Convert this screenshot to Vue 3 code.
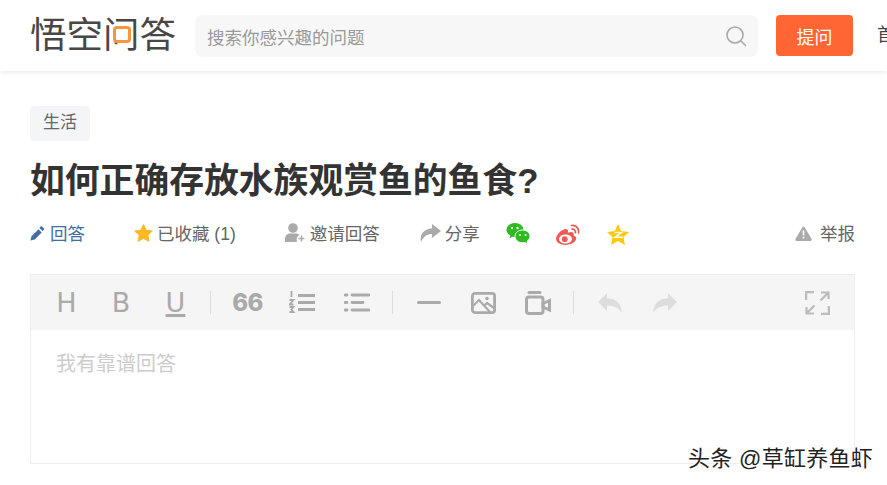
<template>
  <div class="page">
    <header class="topbar">
      <div class="logo">悟空问答<i class="logoMark"></i></div>
      <div class="search">
        <span class="searchText">搜索你感兴趣的问题</span>
        <svg class="searchIcon" width="22" height="22" viewBox="0 0 22 22" fill="none" stroke="#a8a8a8" stroke-width="1.6">
          <circle cx="10" cy="10" r="8" />
          <path d="M16 16l4.5 4.5" stroke-linecap="round" />
        </svg>
      </div>
      <button class="askBtn" type="button">提问</button>
      <nav class="nav">首页</nav>
    </header>

    <main class="content">
      <div class="tag">生活</div>
      <h1 class="title">如何正确存放水族观赏鱼的鱼食?</h1>

      <div class="actions">
        <a class="action action--answer">
          <svg width="15" height="15" viewBox="0 0 15 15" fill="#406fa8">
            <path d="M0.5 14.5l1-4.2 7-7 3.2 3.2-7 7zM9.4 1.9l1.300-1.300a0.900 0.900 0 0 1 1.300 0l1.900 1.900a0.900 0.900 0 0 1 0 1.300l-1.300 1.300z" />
          </svg>
          回答
        </a>
        <a class="action action--fav">
          <svg width="19" height="18" viewBox="0 0 19 18" fill="#fdb824">
            <path d="M9.5 0.6l2.7 5.6 6.100 0.800-4.500 4.200 1.200 6.100-5.500-3-5.500 3 1.200-6.100L0.700 7l6.100-0.800z" stroke="#fdb824" stroke-linejoin="round" />
          </svg>
          已收藏 (1)
        </a>
        <a class="action action--invite">
          <svg width="21" height="20" viewBox="0 0 21 20" fill="#aaa">
            <circle cx="8" cy="5" r="4.800" />
            <path d="M0 19v-3.500c0-3 2.600-5 5-5h6c1.500 0 2.800 0.600 3.600 1.600-2.400 0.800-3.600 3.600-2.600 6.900z" />
            <path d="M16.500 12.500v6M13.500 15.500h6" stroke="#aaa" stroke-width="1.500" fill="none" />
          </svg>
          邀请回答
        </a>
        <a class="action action--share">
          <svg width="21" height="18" viewBox="0 0 21 18" fill="#aaa">
            <path d="M12 0l9 7-9 7v-4c-5 0-8.500 2.500-11 8-1.700-7 2.500-13 11-13.700z" />
          </svg>
          分享
        </a>
        <svg class="social social--wechat" width="24" height="22" viewBox="0 0 24 22">
          <path d="M9 0c4.700 0 8.500 3.100 8.500 7 0 3.900-3.800 7-8.500 7-0.900 0-1.700-0.100-2.500-0.300l-2.900 1.600 0.700-2.700c-2.300-1.300-3.800-3.300-3.800-5.600 0-3.900 3.800-7 8.500-7z" fill="#2dbb1e" />
          <path d="M16.500 7c4.100 0 7.500 2.800 7.500 6.300 0 2-1.100 3.700-2.900 4.900l0.700 3-2.900-1.700c-0.800 0.200-1.600 0.300-2.400 0.300-4.100 0-7.500-2.800-7.500-6.500 0-3.500 3.400-6.300 7.500-6.300z" fill="#2dbb1e" stroke="#fff" stroke-width="1" />
          <circle cx="6" cy="5" r="1.200" fill="#fff" />
          <circle cx="11.500" cy="5" r="1.200" fill="#fff" />
          <circle cx="14" cy="12" r="1.100" fill="#fff" />
          <circle cx="19.500" cy="12" r="1.100" fill="#fff" />
        </svg>
        <svg class="social social--weibo" width="24" height="21" viewBox="0 0 24 21">
          <path d="M9.500 21c-5 0-9.500-2.400-9.500-6.200 0-3.900 6-9.800 9.700-9.800 2 0 2.800 1.600 2.100 3.800 3-1.200 6-1.100 6 1.600 0 0.700-0.200 1.200-0.200 1.200 1.500 0.400 2.600 1.400 2.600 3 0 3.200-5.100 6.400-10.700 6.400z" fill="#ef5b54" />
          <ellipse cx="9.500" cy="15" rx="6.500" ry="4.500" fill="#fff" />
          <circle cx="8.800" cy="15.200" r="2.900" fill="#ef5b54" />
          <path d="M15.500 1.500c4-0.900 8 2.700 7 7.500M16 5.200c2.100-0.400 3.800 1.400 3.400 3.500" fill="none" stroke="#ef5b54" stroke-width="1.700" stroke-linecap="round" />
        </svg>
        <svg class="social social--qzone" width="22" height="21" viewBox="0 0 22 21">
          <path d="M11 0l3.200 7 7.800 0.900-5.500 5 1.400 8.100-6.900-4-6.900 4 1.400-8.100-5.500-5 7.800-0.900z" fill="#fdc90f" />
          <path d="M7.500 8.500h7.200l-6.700 4.700h7.500" fill="none" stroke="#fff" stroke-width="1.500" />
        </svg>
        <a class="action action--report">
          <svg width="17" height="15" viewBox="0 0 17 15" fill="#aaa">
            <path d="M8.500 0.500a1.200 1.200 0 0 1 1 0.600l7 12a1.200 1.200 0 0 1-1 1.800h-14a1.200 1.200 0 0 1-1-1.800l7-12a1.200 1.200 0 0 1 1-0.600z" />
            <path d="M8.500 4.500v5M8.500 10.800v1.700" stroke="#fff" stroke-width="1.700" fill="none" />
          </svg>
          举报
        </a>
      </div>

      <section class="editor">
        <div class="toolbar">
          <span class="tool tool--text">H</span>
          <span class="tool tool--text">B</span>
          <span class="tool tool--text tool--under">U</span>
          <i class="sep"></i>
          <span class="tool tool--quote">66</span>
          <span class="tool">
            <svg width="26" height="23" viewBox="0 0 26 23" fill="none" stroke="#aaa" stroke-width="2.800">
              <path d="M9 4.500h17M9 11.500h17M9 18.500h17" />
              <path d="M2.500 0v6M0.500 9h4l-4 4.500h4M0.500 16h4l-2 2.500 2 2.500h-4" stroke-width="1.800" />
            </svg>
          </span>
          <span class="tool">
            <svg width="26" height="19" viewBox="0 0 26 19" fill="none" stroke="#aaa" stroke-width="2.800" stroke-linecap="round">
              <path d="M1 2h2M8 2h17M1 9.500h2M8 9.500h11M1 17h2M8 17h17" />
            </svg>
          </span>
          <i class="sep"></i>
          <span class="tool">
            <svg width="24" height="3" viewBox="0 0 24 3"><rect width="24" height="3" rx="1.500" fill="#aaa" /></svg>
          </span>
          <span class="tool">
            <svg width="25" height="22" viewBox="0 0 25 22" fill="none" stroke="#aaa" stroke-width="2.800">
              <rect x="1.400" y="1.400" width="22.200" height="19.200" rx="2.500" />
              <path d="M2 14l6-6 11 12M13 14l3-3 7 5" stroke-width="2.200" />
              <circle cx="16" cy="6.500" r="1.800" fill="#aaa" stroke="none" />
            </svg>
          </span>
          <span class="tool">
            <svg width="26" height="24" viewBox="0 0 26 24" fill="none" stroke="#aaa" stroke-width="3">
              <rect x="1.500" y="6" width="16.500" height="16.500" rx="2.500" />
              <path d="M4 1.500h11" stroke-linecap="round" />
              <path d="M18 12.500l6.500-3v9.500l-6.500-3z" />
            </svg>
          </span>
          <i class="sep"></i>
          <span class="tool">
            <svg width="24" height="20" viewBox="0 0 24 20" fill="#ddd">
              <path d="M9 0v5.500c8-0.500 14 4 15 14.500-3.500-5.500-8-7.500-15-7.500v5.500L0 9z" />
            </svg>
          </span>
          <span class="tool">
            <svg width="24" height="20" viewBox="0 0 24 20" fill="#ddd">
              <path d="M15 0v5.500c-8-0.500-14 4-15 14.500 3.500-5.500 8-7.500 15-7.500v5.500l9-9z" />
            </svg>
          </span>
          <span class="tool tool--full">
            <svg width="25" height="24" viewBox="0 0 25 24" fill="none" stroke="#bbb" stroke-width="2.200">
              <path d="M1.100 9V1.100H9M23.900 15v7.900H16M16 1.500h7.500V8M23 2l-7.500 7.500M9 22.500H1.500V16M2 22l7.500-7.500" />
            </svg>
          </span>
        </div>
        <div class="placeholder">我有靠谱回答</div>
      </section>
    </main>

    <div class="watermark">头条 @草缸养鱼虾</div>
  </div>
</template>

<script setup>
</script>

<style>
html,
body {
  margin: 0;
  background: #fff;
  overflow: hidden;
}
</style>

<style scoped>
.page {
  position: relative;
  width: 887px;
  height: 485px;
  overflow: hidden;
  background: #fff;
  font-family: "Liberation Sans", "Noto Sans CJK SC", sans-serif;
  color: #666;
}

.topbar {
  display: flex;
  align-items: flex-start;
  height: 71px;
  padding: 15px 0 0 30px;
  box-sizing: border-box;
  white-space: nowrap;
  box-shadow: 0 1px 5px rgba(0, 0, 0, 0.1);
}

.logo {
  position: relative;
  width: 146px;
  height: 42px;
  flex: none;
  margin-right: 19px;
  font-size: 36.5px;
  font-weight: 400;
  line-height: 42px;
  color: #4a4646;
}

.logoMark {
  position: absolute;
  left: 83px;
  top: 11px;
  width: 18px;
  height: 17px;
  border: 3px solid #f7953a;
  border-radius: 4px;
  box-sizing: border-box;
  background: #fff;
}

.search {
  display: flex;
  align-items: center;
  justify-content: space-between;
  flex: none;
  width: 563px;
  height: 42px;
  margin-right: 18px;
  padding: 0 11px 0 12px;
  box-sizing: border-box;
  border-radius: 8px;
  background: #f7f7f7;
}

.searchText {
  font-size: 17.5px;
  color: #999;
}

.askBtn {
  flex: none;
  width: 77px;
  height: 41px;
  margin-right: 24px;
  border: 0;
  padding: 0;
  border-radius: 4px;
  background: #ff6633;
  color: #fff;
  font: inherit;
  font-size: 18px;
}

.nav {
  flex: none;
  font-size: 18px;
  line-height: 41px;
  color: #444;
}

.content {
  padding: 35px 32px 0 30px;
}

.tag {
  width: 60px;
  height: 35px;
  border-radius: 4px;
  background: #f4f5f6;
  font-size: 17px;
  line-height: 33px;
  text-align: center;
  color: #666;
}

.title {
  margin: 16px 0 0;
  font-size: 34.8px;
  font-weight: 700;
  line-height: 48px;
  color: #333;
}

.actions {
  display: flex;
  align-items: center;
  height: 30px;
  margin-top: 13px;
}

.action {
  display: flex;
  align-items: center;
  gap: 4px;
  height: 28px;
  margin-bottom: 2px;
  font-size: 17.5px;
  color: #666;
  white-space: nowrap;
}

.action svg {
  flex: none;
  margin-top: 2px;
}

.action--answer {
  gap: 5px;
  color: #406fa8;
  margin-right: 49px;
}

.action--fav {
  margin-right: 49px;
}

.action--invite {
  margin-right: 40px;
}

.action--share {
  margin-right: 26px;
}

.action--report {
  margin-left: auto;
  gap: 8px;
}

.social {
  flex: none;
  margin-top: 2px;
}

.social--wechat {
  margin-right: 26px;
}

.social--weibo {
  margin-right: 27px;
}

.editor {
  height: 190px;
  margin-top: 26px;
  box-sizing: border-box;
  border: 1px solid #eee;
}

.toolbar {
  display: flex;
  align-items: center;
  height: 55px;
  padding-left: 8px;
  background: #f5f5f5;
}

.tool {
  display: flex;
  align-items: center;
  justify-content: center;
  flex: none;
  width: 54.6px;
  height: 55px;
}

.tool--text {
  font-family: "DejaVu Sans", "Liberation Sans", sans-serif;
  font-size: 27px;
  color: #aaa;
}

.tool--under {
  text-decoration: underline;
  text-decoration-thickness: 2.5px;
  text-underline-offset: 2px;
}

.tool--quote {
  font-family: "Inter", "Liberation Sans", sans-serif;
  font-size: 24px;
  font-weight: 800;
  letter-spacing: -0.5px;
  color: #aaa;
}

.tool--full {
  margin-left: auto;
  margin-right: 9px;
}

.sep {
  flex: none;
  width: 1px;
  height: 23px;
  margin: 0 9px 0 7.5px;
  background: #ddd;
}

.placeholder {
  padding: 20px 25px;
  font-size: 20px;
  line-height: 28px;
  color: #ccc;
}

.watermark {
  position: absolute;
  left: 688px;
  top: 445px;
  font-size: 22px;
  line-height: 28px;
  letter-spacing: 0.3px;
  color: #222;
  white-space: nowrap;
  text-shadow: 1px 1px 0 #fff, -1px -1px 0 #fff, 1px -1px 0 #fff, -1px 1px 0 #fff;
}
</style>
